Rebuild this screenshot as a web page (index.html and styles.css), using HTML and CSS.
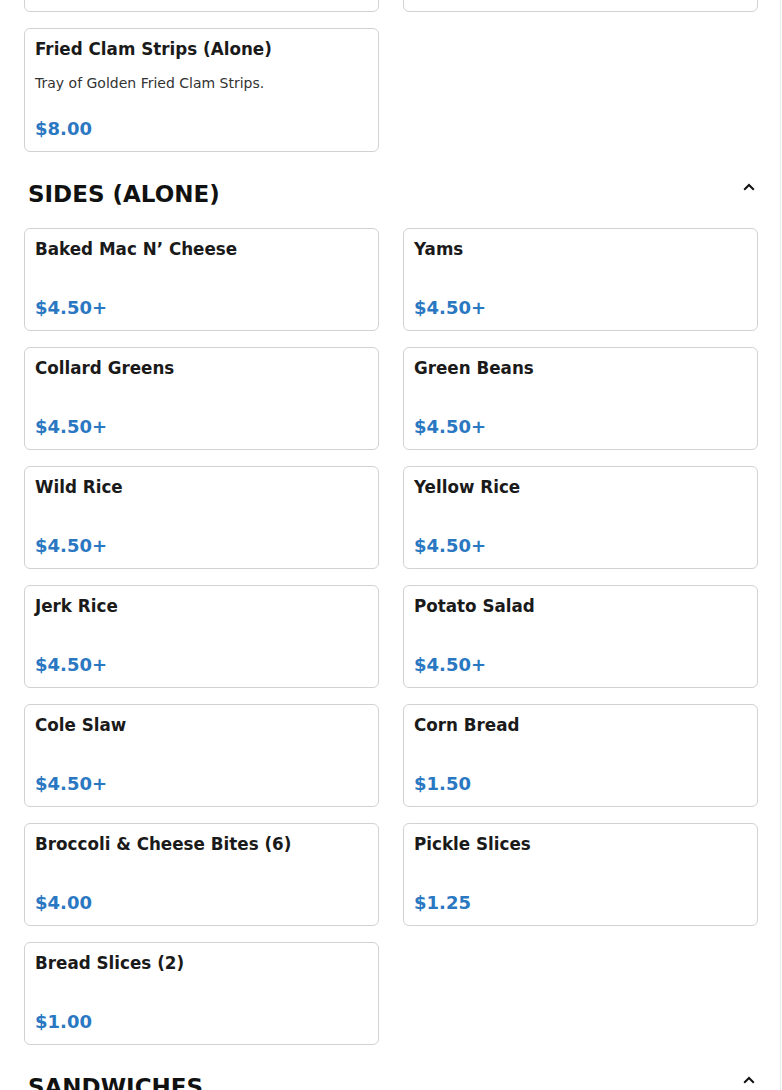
FILE: index.html
```html
<!DOCTYPE html>
<html lang="en">
<head>
<meta charset="utf-8">
<title>Menu</title>
<link rel="stylesheet" href="styles.css">
</head>
<body>
<div class="page">
  <section class="section">
    <div class="grid">
      <div class="card">
        <h3 class="card-title">Fried Shrimp (Alone)</h3>
        <div class="card-price">$9.00</div>
      </div>
      <div class="card">
        <h3 class="card-title">Fried Fish (Alone)</h3>
        <div class="card-price">$9.00</div>
      </div>
      <div class="card">
        <h3 class="card-title">Fried Clam Strips (Alone)</h3>
        <p class="card-desc">Tray of Golden Fried Clam Strips.</p>
        <div class="card-price">$8.00</div>
      </div>
    </div>
  </section>

  <section class="section">
    <div class="section-head">
      <h2 class="section-title">SIDES (ALONE)</h2>
      <button class="toggle" aria-label="Collapse">
        <svg width="12" height="8" viewBox="0 0 12 8"><polyline points="1.2,6.8 6,2 10.8,6.8" fill="none" stroke="#111" stroke-width="2"/></svg>
      </button>
    </div>
    <div class="grid">
      <div class="card"><h3 class="card-title">Baked Mac N’ Cheese</h3><div class="card-price">$4.50+</div></div>
      <div class="card"><h3 class="card-title">Yams</h3><div class="card-price">$4.50+</div></div>
      <div class="card"><h3 class="card-title">Collard Greens</h3><div class="card-price">$4.50+</div></div>
      <div class="card"><h3 class="card-title">Green Beans</h3><div class="card-price">$4.50+</div></div>
      <div class="card"><h3 class="card-title">Wild Rice</h3><div class="card-price">$4.50+</div></div>
      <div class="card"><h3 class="card-title">Yellow Rice</h3><div class="card-price">$4.50+</div></div>
      <div class="card"><h3 class="card-title">Jerk Rice</h3><div class="card-price">$4.50+</div></div>
      <div class="card"><h3 class="card-title">Potato Salad</h3><div class="card-price">$4.50+</div></div>
      <div class="card"><h3 class="card-title">Cole Slaw</h3><div class="card-price">$4.50+</div></div>
      <div class="card"><h3 class="card-title">Corn Bread</h3><div class="card-price">$1.50</div></div>
      <div class="card"><h3 class="card-title">Broccoli &amp; Cheese Bites (6)</h3><div class="card-price">$4.00</div></div>
      <div class="card"><h3 class="card-title">Pickle Slices</h3><div class="card-price">$1.25</div></div>
      <div class="card"><h3 class="card-title">Bread Slices (2)</h3><div class="card-price">$1.00</div></div>
    </div>
  </section>

  <section class="section">
    <div class="section-head">
      <h2 class="section-title">SANDWICHES</h2>
      <button class="toggle" aria-label="Collapse">
        <svg width="12" height="8" viewBox="0 0 12 8"><polyline points="1.2,6.8 6,2 10.8,6.8" fill="none" stroke="#111" stroke-width="2"/></svg>
      </button>
    </div>
    <div class="grid">
      <div class="card"><h3 class="card-title">Fish Sandwich</h3><div class="card-price">$8.00</div></div>
      <div class="card"><h3 class="card-title">Chicken Sandwich</h3><div class="card-price">$8.00</div></div>
    </div>
  </section>
</div>
</body>
</html>
```

FILE: styles.css
```css
* { box-sizing: border-box; }

html, body {
  margin: 0;
  padding: 0;
  background: #fff;
  overflow: hidden;
}

body {
  font-family: "DejaVu Sans", "Liberation Sans", sans-serif;
  color: #1c1c1c;
}

.page {
  width: 781px;
  margin-top: -91px;
  padding: 0 22px 40px 24px;
  border-right: 1px solid #ececec;
  min-height: 1300px;
}

.section + .section {
  margin-top: 28px;
}

.section-head {
  display: flex;
  justify-content: space-between;
  align-items: flex-start;
  padding-left: 4px;
  margin-bottom: 20px;
}

.section-title {
  margin: 0;
  font-size: 23px;
  line-height: 28px;
  font-weight: 700;
  color: #111;
}

.toggle {
  width: 18px;
  height: 14px;
  padding: 0;
  border: 0;
  background: transparent;
  display: flex;
  align-items: center;
  justify-content: center;
  cursor: pointer;
}

.toggle svg { display: block; }

.grid {
  display: grid;
  grid-template-columns: 1fr 1fr;
  column-gap: 24px;
  row-gap: 16px;
  align-items: start;
}

.card {
  display: flex;
  flex-direction: column;
  border: 1px solid #d2d2d2;
  border-radius: 6px;
  padding: 9px 10px 11px 10px;
  background: #fff;
}

.card-title {
  margin: 0 0 13px 0;
  font-size: 16.75px;
  line-height: 22px;
  font-weight: 700;
  color: #1a1a1a;
}

.card-desc {
  margin: 0;
  font-size: 14px;
  line-height: 21px;
  color: #333;
}

.card-price {
  margin-top: 24px;
  font-size: 18px;
  line-height: 22px;
  font-weight: 700;
  color: #2a78c2;
}
```
